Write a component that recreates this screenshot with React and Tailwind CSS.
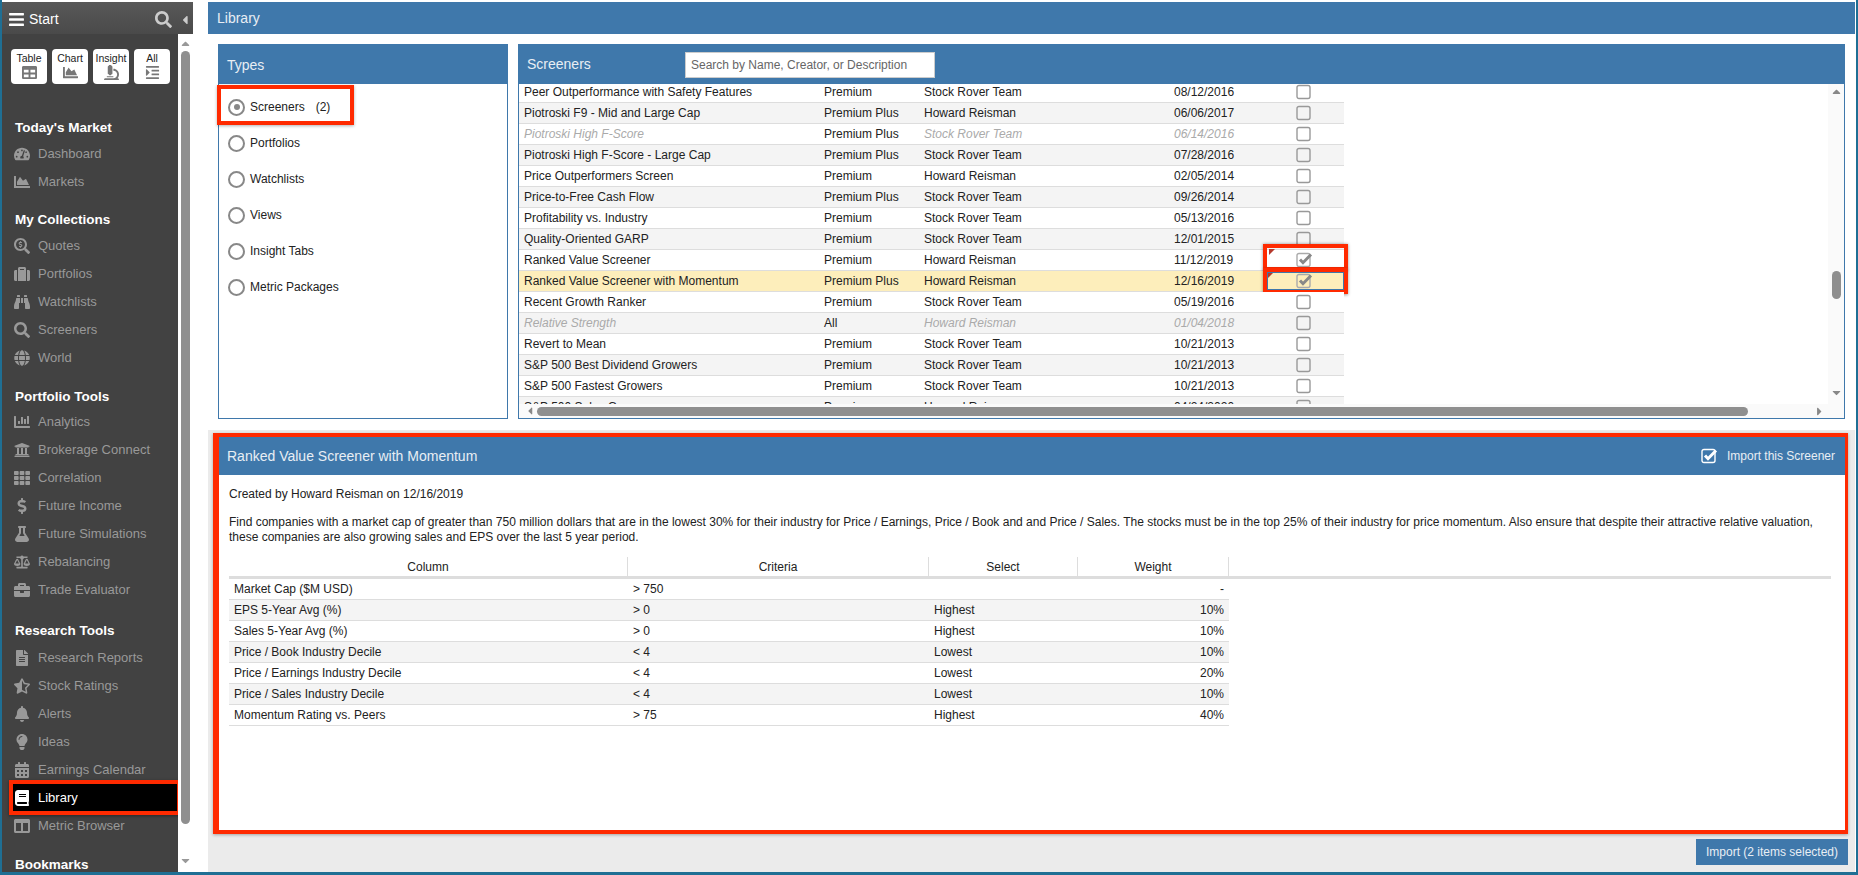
import {
  FaBalanceScale, FaBars, FaBell, FaBinoculars, FaBook, FaBriefcase, FaCalendarAlt, FaCaretDown, FaCaretLeft,
  FaCaretRight, FaCaretUp, FaChartArea, FaChartBar, FaColumns, FaDollarSign, FaFileAlt, FaFlask, FaGlobe,
  FaIndent, FaLightbulb, FaMicroscope, FaSearch, FaSearchDollar, FaStarHalfAlt, FaSuitcase, FaTable,
  FaTachometerAlt, FaTh, FaUniversity,
} from "react-icons/fa";

const sections = [
  { title: "Today's Market", head: "h-[24px]", gap: "mb-[13px]", items: [["Dashboard", FaTachometerAlt], ["Markets", FaChartArea]] },
  {
    title: "My Collections",
    head: "h-[23px]",
    gap: "mb-[14px]",
    items: [["Quotes", FaSearchDollar], ["Portfolios", FaSuitcase], ["Watchlists", FaBinoculars], ["Screeners", FaSearch], ["World", FaGlobe]],
  },
  {
    title: "Portfolio Tools",
    head: "h-[22px]",
    gap: "mb-[14px]",
    items: [
      ["Analytics", FaChartBar], ["Brokerage Connect", FaUniversity], ["Correlation", FaTh], ["Future Income", FaDollarSign],
      ["Future Simulations", FaFlask], ["Rebalancing", FaBalanceScale], ["Trade Evaluator", FaBriefcase],
    ],
  },
  {
    title: "Research Tools",
    head: "h-[26px]",
    gap: "mb-[14px]",
    items: [
      ["Research Reports", FaFileAlt], ["Stock Ratings", FaStarHalfAlt], ["Alerts", FaBell], ["Ideas", FaLightbulb],
      ["Earnings Calendar", FaCalendarAlt], ["Library", FaBook], ["Metric Browser", FaColumns],
    ],
  },
];

const startButtons = [["Table", FaTable], ["Chart", FaChartArea], ["Insight", FaMicroscope], ["All", FaIndent]];

const types = ["Portfolios", "Watchlists", "Views", "Insight Tabs", "Metric Packages"];

// name, tier, creator, date, flags
const screeners = [
  ["Peer Outperformance with Safety Features", "Premium", "Stock Rover Team", "08/12/2016"],
  ["Piotroski F9 - Mid and Large Cap", "Premium Plus", "Howard Reisman", "06/06/2017"],
  ["Piotroski High F-Score", "Premium Plus", "Stock Rover Team", "06/14/2016", "muted"],
  ["Piotroski High F-Score - Large Cap", "Premium Plus", "Stock Rover Team", "07/28/2016"],
  ["Price Outperformers Screen", "Premium", "Howard Reisman", "02/05/2014"],
  ["Price-to-Free Cash Flow", "Premium Plus", "Stock Rover Team", "09/26/2014"],
  ["Profitability vs. Industry", "Premium", "Stock Rover Team", "05/13/2016"],
  ["Quality-Oriented GARP", "Premium", "Stock Rover Team", "12/01/2015"],
  ["Ranked Value Screener", "Premium", "Howard Reisman", "11/12/2019", "first"],
  ["Ranked Value Screener with Momentum", "Premium Plus", "Howard Reisman", "12/16/2019", "active"],
  ["Recent Growth Ranker", "Premium", "Stock Rover Team", "05/19/2016"],
  ["Relative Strength", "All", "Howard Reisman", "01/04/2018", "muted"],
  ["Revert to Mean", "Premium", "Stock Rover Team", "10/21/2013"],
  ["S&P 500 Best Dividend Growers", "Premium", "Stock Rover Team", "10/21/2013"],
  ["S&P 500 Fastest Growers", "Premium", "Stock Rover Team", "10/21/2013"],
  ["S&P 500 Sales Growers", "Premium", "Howard Reisman", "04/24/2020"],
];

const criteria = [
  ["Market Cap ($M USD)", "> 750", "", "-"],
  ["EPS 5-Year Avg (%)", "> 0", "Highest", "10%"],
  ["Sales 5-Year Avg (%)", "> 0", "Highest", "10%"],
  ["Price / Book Industry Decile", "< 4", "Lowest", "10%"],
  ["Price / Earnings Industry Decile", "< 4", "Lowest", "20%"],
  ["Price / Sales Industry Decile", "< 4", "Lowest", "10%"],
  ["Momentum Rating vs. Peers", "> 75", "Highest", "40%"],
];

const Checkbox = ({ checked, light }) => (
  <svg width="18" height="16" viewBox="0 0 18 16" fill="none" className="shrink-0">
    <rect x="1" y="1.5" width="13" height="13" rx="2" stroke={light ? "#fff" : checked ? "#aaa" : "#999"} strokeWidth="1.4" />
    {checked && <path d="M4 7.5l3 3.2L15 2.5" stroke={light ? "#fff" : "#888"} strokeWidth="3" />}
  </svg>
);

const Sidebar = () => (
  <div className="w-[191px] shrink-0 flex flex-col overflow-hidden mt-[2px]">
    <div className="h-[32px] shrink-0 flex items-center pt-[3px] bg-gradient-to-b from-[#585858] to-[#4a4a4a] text-white">
      <FaBars className="ml-[6px] text-[17px]" />
      <span className="ml-[4px] text-[14px]">Start</span>
      <FaSearch className="ml-auto text-[#ccc] text-[17px]" />
      <FaCaretLeft className="ml-[6px] mr-[1px] text-[#ccc] text-[14px]" />
    </div>
    <div className="flex flex-1 min-h-0">
      <div className="w-[176px] bg-[#424242] pt-[15px] relative">
        <div className="flex gap-[5px] pl-[9px]">
          {startButtons.map(([label, Icon]) => (
            <div key={label} className="w-[36px] h-[35px] bg-white rounded-[4px] flex flex-col items-center pt-[3px] text-[10.5px] leading-[12px] text-[#222]">
              {label}
              <Icon className="text-[#777] text-[15px] mt-[1px]" />
            </div>
          ))}
        </div>
        <div className="mt-[32px]">
          {sections.map((s) => (
            <div key={s.title} className={s.gap}>
              <div className={`${s.head} pl-[13px] flex items-center text-white font-bold text-[13.5px]`}>{s.title}</div>
              {s.items.map(([label, Icon]) => {
                const active = label === "Library";
                return (
                  <div key={label} className={`relative h-[28px] flex items-center pl-[12px] text-[13px] ${active ? "text-white" : "text-[#999]"}`}>
                    {active && <div className="absolute left-[7px] top-[-4px] w-[172px] h-[35px] bg-black border-4 border-[#ff2a00] shadow-[0_1px_3px_rgba(0,0,0,0.4)]" />}
                    <span className="relative w-[24px] flex">
                      <Icon className="text-[16px]" />
                    </span>
                    <span className="relative">{label}</span>
                  </div>
                );
              })}
            </div>
          ))}
          <div className="h-[23px] pl-[13px] flex items-center text-white font-bold text-[13.5px]">Bookmarks</div>
        </div>
      </div>
      <div className="w-[15px] bg-white flex flex-col items-center relative">
        <FaCaretUp className="text-[#999] text-[13px] mt-[3px]" />
        <div className="w-[9px] h-[773px] mt-[1px] rounded-full bg-[#8f8f8f]" />
        <FaCaretDown className="text-[#999] text-[13px] mt-[30px]" />
      </div>
    </div>
  </div>
);

const TypesPanel = () => (
  <div className="w-[290px] shrink-0 flex flex-col">
    <div className="h-[40px] bg-[#3f78ab] text-[#e8eef4] text-[14px] flex items-center pl-[9px] pt-[2px]">Types</div>
    <div className="flex-1 border-x border-b border-[#3f78ab] bg-white pt-[1px]">
      <div className="relative -ml-[2px] w-[137px] h-[40px] border-4 border-[#ff2a00] shadow-[0_1px_3px_rgba(0,0,0,0.3)] flex items-center pl-[7px] pt-[4px] bg-white text-[12px] text-[#222]">
        <span className="w-[17px] h-[17px] rounded-full border-2 border-[#888] flex items-center justify-center">
          <span className="w-[6px] h-[6px] rounded-full bg-[#888]" />
        </span>
        <span className="ml-[5px]">Screeners</span>
        <span className="ml-[11px]">(2)</span>
      </div>
      {types.map((t) => (
        <div key={t} className="h-[36px] flex items-center pl-[9px] text-[12px] text-[#222]">
          <span className="w-[17px] h-[17px] rounded-full border-2 border-[#888]" />
          <span className="ml-[5px]">{t}</span>
        </div>
      ))}
    </div>
  </div>
);

const ScreenerRow = ({ row, index }) => {
  const [name, tier, creator, date, flag] = row;
  const muted = flag === "muted";
  const active = flag === "active";
  const checked = flag === "first" || active;
  const mutedCls = muted ? "italic text-[#aaa]" : "";
  return (
    <div className={`relative h-[21px] shrink-0 flex items-center border-b border-[#ddd] text-[12px] text-[#222] ${active ? "bg-[#fdeebb]" : index % 2 ? "bg-[#f4f4f4]" : "bg-white"}`}>
      <div className={`w-[300px] shrink-0 pl-[5px] ${mutedCls}`}>{name}</div>
      <div className="w-[105px] shrink-0 pl-[5px]">{tier}</div>
      <div className={`w-[250px] shrink-0 ${mutedCls}`}>{creator}</div>
      <div className={`w-[110px] shrink-0 ${mutedCls}`}>{date}</div>
      <div className="pl-[12px]">
        <Checkbox checked={checked} />
      </div>
      {flag === "first" && (
        <div className="absolute left-[744px] top-[-6px] w-[85px] h-[27px] border-4 border-[#ff2a00] shadow-[0_0_3px_rgba(0,0,0,0.4)]">
          <div className="w-0 h-0 border-t-[6px] border-r-[6px] border-t-[#b5392c] border-r-transparent ml-[2px] mt-[1px]" />
        </div>
      )}
      {active && (
        <div className="absolute left-[744px] top-[-3px] w-[85px] h-[26px] border-4 border-[#ff2a00] shadow-[0_1px_3px_rgba(0,0,0,0.4)]">
          <div className="w-full h-full border border-[#3f78ab]">
            <div className="w-0 h-0 border-t-[5px] border-r-[5px] border-t-[#b5392c] border-r-transparent" />
          </div>
        </div>
      )}
    </div>
  );
};

const ScreenersPanel = () => (
  <div className="flex-1 min-w-0 flex flex-col">
    <div className="h-[40px] bg-[#3f78ab] flex items-center pl-[9px] text-[#e8eef4] text-[14px]">
      <span className="w-[158px]">Screeners</span>
      <div className="w-[250px] h-[26px] mt-[2px] bg-white border border-[#ccc] flex items-center pl-[5px] text-[12px] text-[#666]">
        Search by Name, Creator, or Description
      </div>
    </div>
    <div className="flex-1 min-h-0 border-x border-b border-[#3f78ab] flex flex-col bg-white">
      <div className="h-[320px] shrink-0 flex">
        <div className="flex-1 overflow-hidden">
          <div className="w-[825px] -mt-[2px] flex flex-col">
            {screeners.map((row, i) => (
              <ScreenerRow key={row[0]} row={row} index={i} />
            ))}
          </div>
        </div>
        <div className="w-[16px] bg-[#fafafa] flex flex-col items-center">
          <FaCaretUp className="text-[#888] text-[13px] mt-[1px]" />
          <div className="w-[9px] h-[28px] rounded-full bg-[#8f8f8f] mt-[173px]" />
          <FaCaretDown className="text-[#888] text-[13px] mt-[87px]" />
        </div>
      </div>
      <div className="flex-1 bg-[#fafafa] flex items-center">
        <FaCaretLeft className="text-[#888] text-[12px] ml-[5px]" />
        <div className="w-[1211px] h-[9px] rounded-full bg-[#8f8f8f] ml-[1px]" />
        <FaCaretRight className="text-[#888] text-[13px] ml-[65px]" />
      </div>
    </div>
  </div>
);

const DetailPanel = () => (
  <div className="h-[401px] border-t-4 border-b-4 border-l-[6px] border-r-[3px] border-[#ff2a00] bg-white shadow-[0_1px_3px_rgba(0,0,0,0.3)] flex flex-col">
    <div className="h-[38px] shrink-0 bg-[#3f78ab] flex items-center justify-between pl-[8px] pr-[10px] text-[#e8eef4]">
      <span className="text-[14px]">Ranked Value Screener with Momentum</span>
      <span className="flex items-center gap-[8px] text-[12px]">
        <Checkbox checked light />
        Import this Screener
      </span>
    </div>
    <div className="pl-[10px] pr-[14px] pt-[12px] text-[12px] leading-[15px] text-[#222]">
      <p>Created by Howard Reisman on 12/16/2019</p>
      <p className="mt-[13px]">
        Find companies with a market cap of greater than 750 million dollars that are in the lowest 30% for their industry for Price / Earnings, Price / Book and and Price / Sales. The stocks must be in the top 25% of their industry for price momentum. Also ensure that despite their attractive relative valuation, these companies are also growing sales and EPS over the last 5 year period.
      </p>
      <div className="mt-[12px]">
        <div className="h-[22px] grid grid-cols-[399px_301px_149px_151px] border-b-[3px] border-[#ddd] text-center">
          {["Column", "Criteria", "Select", "Weight"].map((h) => (
            <div key={h} className="border-r border-[#ddd] flex items-center justify-center pt-[1px]">{h}</div>
          ))}
        </div>
        {criteria.map((c, i) => (
          <div key={c[0]} className={`w-[1000px] h-[21px] grid grid-cols-[399px_301px_149px_151px] items-center border-b border-[#ddd] ${i % 2 ? "bg-[#f4f4f4]" : "bg-white"}`}>
            <div className="pl-[5px]">{c[0]}</div>
            <div className="pl-[5px]">{c[1]}</div>
            <div className="pl-[5px]">{c[2]}</div>
            <div className="text-right pr-[5px]">{c[3]}</div>
          </div>
        ))}
      </div>
    </div>
  </div>
);

export default function App() {
  return (
    <div className="w-[1858px] h-[875px] flex overflow-hidden bg-white border-l-2 border-r-2 border-b-[3px] border-[#1f6f94] font-['Liberation_Sans',Arial,sans-serif]">
      <Sidebar />
      <div className="flex-1 min-w-0 flex flex-col pl-[15px] pt-[2px]">
        <div className="h-[32px] shrink-0 bg-[#3f78ab] text-[#e8eef4] text-[14px] flex items-center pl-[9px] mr-px">Library</div>
        <div className="h-[375px] shrink-0 mt-[10px] flex gap-[10px] pl-[10px] pr-[11px]">
          <TypesPanel />
          <ScreenersPanel />
        </div>
        <div className="flex-1 mt-[11px] mr-px bg-[#ebebeb] pl-[5px] pr-[7px] pt-[3px]">
          <DetailPanel />
          <div className="mt-[5px] flex justify-end">
            <div className="w-[152px] h-[26px] bg-[#3f78ab] text-[#e8eef4] text-[12px] flex items-center justify-center">Import (2 items selected)</div>
          </div>
        </div>
      </div>
    </div>
  );
}
